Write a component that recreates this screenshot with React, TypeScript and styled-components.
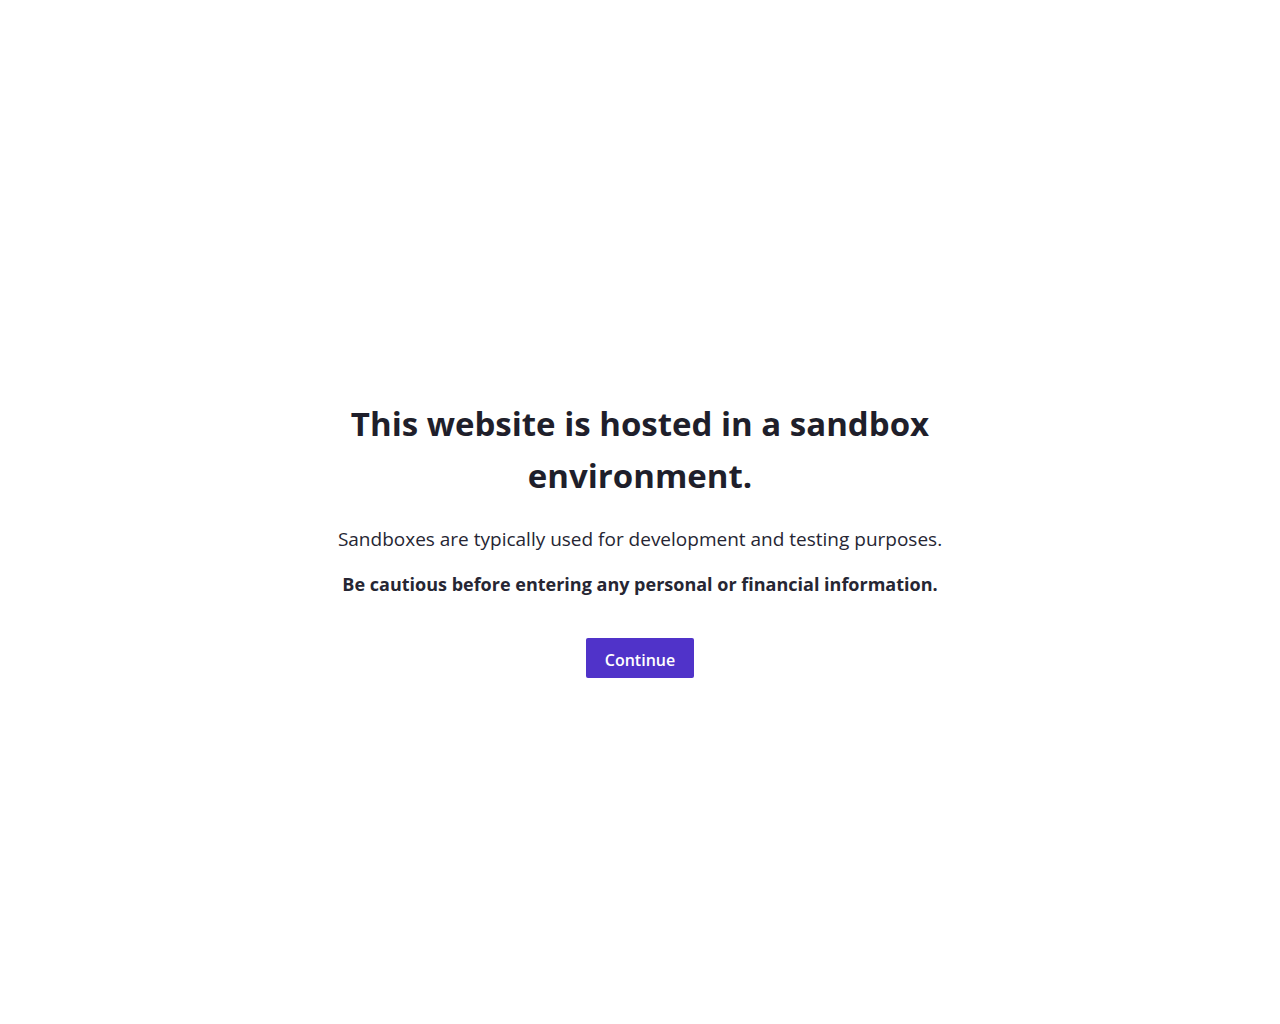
import styled, { createGlobalStyle } from "styled-components";

const GlobalStyle = createGlobalStyle`
  html, body {
    margin: 0;
    padding: 0;
    background: #ffffff;
  }
  body {
    font-family: "Open Sans", "Liberation Sans", sans-serif;
    color: #1f1f2b;
  }
`;

const Page = styled.main`
  min-height: 100vh;
  display: flex;
  align-items: center;
  justify-content: center;
  padding-top: 52px;
  box-sizing: border-box;
`;

const Notice = styled.section`
  width: 640px;
  display: flex;
  flex-direction: column;
  align-items: center;
  text-align: center;
`;

const Heading = styled.h1`
  margin: 0 0 22px;
  font-size: 33px;
  line-height: 52px;
  font-weight: 700;
  color: #1f1f2b;
`;

const Text = styled.p<{ $strong?: boolean }>`
  margin: 0 0 ${({ $strong }) => ($strong ? "39px" : "15px")};
  font-size: ${({ $strong }) => ($strong ? "18px" : "19px")};
  line-height: 30px;
  font-weight: ${({ $strong }) => ($strong ? 700 : 400)};
  color: #262633;
`;

const ContinueButton = styled.button`
  width: 108px;
  height: 40px;
  border: none;
  border-radius: 2px;
  background: #5033c9;
  color: #ffffff;
  font-family: inherit;
  font-size: 16px;
  font-weight: 600;
  padding: 4px 0 0;
  cursor: pointer;
`;

const App = () => (
  <>
    <GlobalStyle />
    <Page>
      <Notice>
        <Heading>This website is hosted in a sandbox environment.</Heading>
        <Text>Sandboxes are typically used for development and testing purposes.</Text>
        <Text $strong>Be cautious before entering any personal or financial information.</Text>
        <ContinueButton>Continue</ContinueButton>
      </Notice>
    </Page>
  </>
);

export default App;
